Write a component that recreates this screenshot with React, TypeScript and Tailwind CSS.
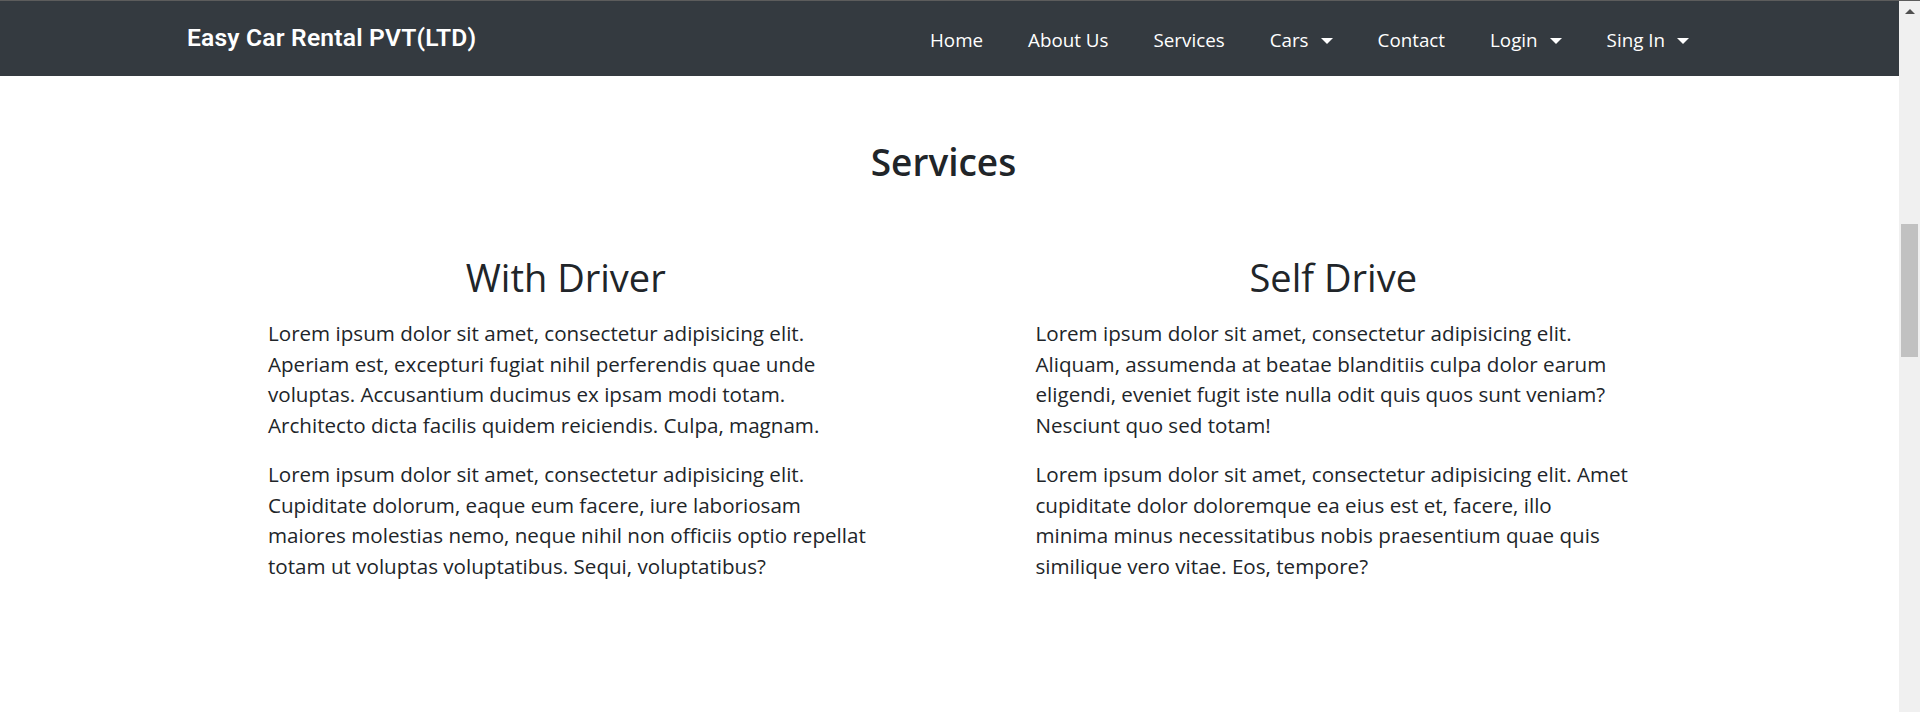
const navItems: { label: string; caret?: boolean }[] = [
  { label: "Home" },
  { label: "About Us" },
  { label: "Services" },
  { label: "Cars", caret: true },
  { label: "Contact" },
  { label: "Login", caret: true },
  { label: "Sing In", caret: true },
];

const services: { title: string; paragraphs: string[][] }[] = [
  {
    title: "With Driver",
    paragraphs: [
      [
        "Lorem ipsum dolor sit amet, consectetur adipisicing elit.",
        "Aperiam est, excepturi fugiat nihil perferendis quae unde",
        "voluptas. Accusantium ducimus ex ipsam modi totam.",
        "Architecto dicta facilis quidem reiciendis. Culpa, magnam.",
      ],
      [
        "Lorem ipsum dolor sit amet, consectetur adipisicing elit.",
        "Cupiditate dolorum, eaque eum facere, iure laboriosam",
        "maiores molestias nemo, neque nihil non officiis optio repellat",
        "totam ut voluptas voluptatibus. Sequi, voluptatibus?",
      ],
    ],
  },
  {
    title: "Self Drive",
    paragraphs: [
      [
        "Lorem ipsum dolor sit amet, consectetur adipisicing elit.",
        "Aliquam, assumenda at beatae blanditiis culpa dolor earum",
        "eligendi, eveniet fugit iste nulla odit quis quos sunt veniam?",
        "Nesciunt quo sed totam!",
      ],
      [
        "Lorem ipsum dolor sit amet, consectetur adipisicing elit. Amet",
        "cupiditate dolor doloremque ea eius est et, facere, illo",
        "minima minus necessitatibus nobis praesentium quae quis",
        "similique vero vitae. Eos, tempore?",
      ],
    ],
  },
];

function Caret() {
  return (
    <span className="ml-3 inline-block h-0 w-0 border-x-[6px] border-t-[6px] border-x-transparent border-t-white align-middle" />
  );
}

export default function App() {
  return (
    <div className="flex min-h-[712px] flex-col bg-white">
      {/* window edge */}
      <div className="h-px bg-[#5c5c5c]" />
      <div className="flex flex-1">
        <div className="min-w-0 flex-1">
          <nav className="flex h-[75px] items-center justify-between bg-[#343a40] pl-[187px] pr-[187px]">
            <a className="font-['Roboto',sans-serif] text-[24.6px] font-semibold tracking-[0.2px] text-white">
              Easy Car Rental PVT(LTD)
            </a>
            <ul className="flex items-center font-['Open_Sans',sans-serif] text-[18.8px] text-white">
              {navItems.map((item) => (
                <li key={item.label} className="flex items-center px-[22.5px] pt-[4px] last:pr-[23px]">
                  <span>{item.label}</span>
                  {item.caret && <Caret />}
                </li>
              ))}
            </ul>
          </nav>

          <main className="px-[182px] text-[#212529]">
            <h1 className="mt-[63px] pr-[12px] text-center font-['Open_Sans',sans-serif] text-[37px] font-semibold leading-[46px]">
              Services
            </h1>
            <div className="mt-[69px] grid grid-cols-2">
              {services.map((s) => (
                <section key={s.title}>
                  <h2 className="text-center font-['Open_Sans',sans-serif] text-[38px] font-normal leading-[46px]">
                    {s.title}
                  </h2>
                  <div className="mt-[18px] px-[86px] font-['Open_Sans',sans-serif] text-[20.6px] leading-[30.5px]">
                    {s.paragraphs.map((lines, i) => (
                      <p key={i} className="mb-[19px] whitespace-nowrap">
                        {lines.map((line, j) => (
                          <span key={j}>
                            {line}
                            {j < lines.length - 1 && <br />}
                          </span>
                        ))}
                      </p>
                    ))}
                  </div>
                </section>
              ))}
            </div>
          </main>
        </div>

        {/* scrollbar */}
        <div className="flex w-[21px] shrink-0 flex-col items-center bg-[#f0f0f0]">
          <div className="mt-[8px] h-0 w-0 border-x-[5px] border-b-[5px] border-x-transparent border-b-[#505050]" />
          <div className="mt-[210px] h-[133px] w-[17px] bg-[#c1c1c1]" />
        </div>
      </div>
    </div>
  );
}
